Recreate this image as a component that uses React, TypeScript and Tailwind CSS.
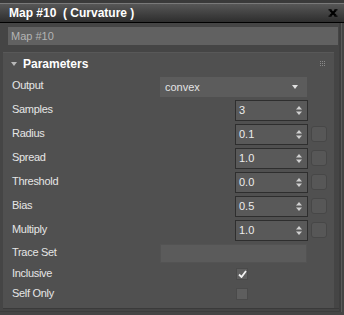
const font = { fontFamily: '"Liberation Sans", Arial, sans-serif' };

function UpDown() {
  return (
    <svg width="6" height="9" viewBox="0 0 6 9" className="shrink-0">
      <path d="M3 0 L6 3.5 L0 3.5 Z" fill="#d0d0d0" />
      <path d="M0 5.5 L6 5.5 L3 9 Z" fill="#d0d0d0" />
    </svg>
  );
}

function Spinner({ value, button = true }: { value: string; button?: boolean }) {
  return (
    <div className="flex items-center gap-[3px]">
      <div className="w-[73px] h-[21px] bg-[#595959] border border-[#2e2e2e] flex items-center justify-between pl-[3px] pr-[5px]">
        <span className="text-[11px] text-[#ececec]">{value}</span>
        <UpDown />
      </div>
      {button ? (
        <div className="w-[16px] h-[16px] rounded-[3px] bg-[#575757] border border-[#474747]" />
      ) : (
        <div className="w-[16px]" />
      )}
    </div>
  );
}

function Row({ label, h = 'h-[24px]', children }: { label: string; h?: string; children?: React.ReactNode }) {
  return (
    <div className={`flex items-center ${h}`}>
      <div className="w-[157px] pl-[9px] text-[11px] tracking-[-0.3px] text-[#e6e6e6] -mt-[2px]">{label}</div>
      <div className="flex-1 flex items-center">{children}</div>
    </div>
  );
}

function SpinRow({ label, value, button = true }: { label: string; value: string; button?: boolean }) {
  return (
    <Row label={label}>
      <div className="ml-[75px]">
        <Spinner value={value} button={button} />
      </div>
    </Row>
  );
}

function Checkbox({ checked }: { checked?: boolean }) {
  return (
    <div className="ml-[76px] w-[12px] h-[12px] bg-[#5e5e5e] border border-[#4a4a4a] flex items-center justify-center">
      {checked && (
        <svg width="9" height="8" viewBox="0 0 9 8">
          <path d="M1 4.5 L3.5 7 L8 1" stroke="#f2f2f2" strokeWidth="1.8" fill="none" />
        </svg>
      )}
    </div>
  );
}

export default function App() {
  return (
    <div className="w-[344px] h-[315px] bg-[#454545] overflow-hidden" style={font}>
      <div className="h-[3px] bg-[#3a3a3a]" />
      <div className="h-[20px] border-t border-b border-t-[#7a7a7a] border-b-black bg-gradient-to-b from-[#575757] to-[#2e2e2e] flex items-center justify-between pl-[9px] pr-[6px]">
        <span className="text-[12px] font-bold text-white whitespace-pre leading-none">Map #10  ( Curvature )</span>
        <svg width="10" height="8" viewBox="0 0 10 8">
          <path d="M2 1 L8 7 M8 1 L2 7" stroke="#000" strokeWidth="2.2" />
          <path d="M0.5 0.8 H3.5 M6.5 0.8 H9.5 M0.5 7.2 H3.5 M6.5 7.2 H9.5" stroke="#111" strokeWidth="1.4" />
        </svg>
      </div>
      <div className="flex">
        <div className="w-[339px]">
          <div className="pt-[4px] pl-[8px]">
            <div className="w-[330px] h-[18px] bg-[#616161] flex items-center pl-[3px] text-[11px] text-[#b4b4b4]">Map #10</div>
          </div>
          <div className="mt-[7px] ml-[3px] w-[331px] h-[256px] bg-[#505050] border-t border-[#585858]">
            <div className="h-[21px] flex items-center justify-between pl-[8px] pr-[8px]">
              <div className="flex items-center gap-[6px]">
                <svg width="6" height="4" viewBox="0 0 6 4">
                  <path d="M0 0 L6 0 L3 4 Z" fill="#b8b8b8" />
                </svg>
                <span className="text-[12px] font-bold text-white">Parameters</span>
              </div>
              <svg width="6" height="6" viewBox="0 0 6 6">
                {[0, 2, 4].map((y) =>
                  [0, 2, 4].map((x) => <rect key={`${x}-${y}`} x={x} y={y} width="1" height="1" fill="#8a8a8a" />)
                )}
              </svg>
            </div>
            <Row label="Output">
              <div className="mt-[2px] w-[147px] h-[20px] bg-[#5c5c5c] flex items-center justify-between pl-[5px] pr-[9px]">
                <span className="text-[11px] text-[#e4e4e4]">convex</span>
                <svg width="6" height="4" viewBox="0 0 6 4">
                  <path d="M0 0 L6 0 L3 4 Z" fill="#e0e0e0" />
                </svg>
              </div>
            </Row>
            <SpinRow label="Samples" value="3" button={false} />
            <SpinRow label="Radius" value="0.1" />
            <SpinRow label="Spread" value="1.0" />
            <SpinRow label="Threshold" value="0.0" />
            <SpinRow label="Bias" value="0.5" />
            <SpinRow label="Multiply" value="1.0" />
            <Row label="Trace Set" h="h-[22px]">
              <div className="w-[147px] h-[19px] bg-[#5b5b5b] border border-[#535353]" />
            </Row>
            <Row label="Inclusive" h="h-[20px]">
              <Checkbox checked />
            </Row>
            <Row label="Self Only" h="h-[20px]">
              <Checkbox />
            </Row>
          </div>
          <div className="ml-[3px] h-[1px] bg-[#3a3a3a]" />
          <div className="h-[2px]" />
          <div className="h-[1px] bg-[#3c3c3c]" />
        </div>
        <div className="w-[5px] flex">
          <div className="w-[2px] bg-[#3e3e3e]" />
          <div className="w-[1px] bg-[#5a5a5a]" />
          <div className="flex-1 bg-[#444]" />
        </div>
      </div>
    </div>
  );
}
